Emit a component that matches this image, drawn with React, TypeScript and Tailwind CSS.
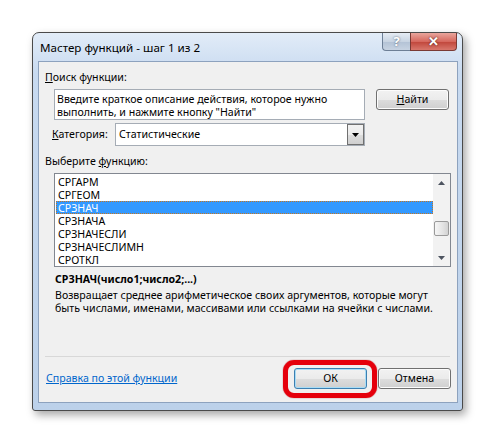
import React from "react";

const items = [
  "СРГАРМ",
  "СРГЕОМ",
  "СРЗНАЧ",
  "СРЗНАЧА",
  "СРЗНАЧЕСЛИ",
  "СРЗНАЧЕСЛИМН",
  "СРОТКЛ",
];

const Btn = ({
  children,
  primary,
}: {
  children: React.ReactNode;
  primary?: boolean;
}) => (
  <div
    className={`flex h-[21px] w-[73px] items-center justify-center rounded-[3px] border ${
      primary
        ? "border-[#3c7fb1] shadow-[inset_0_0_0_1px_#a8dcf5]"
        : "border-[#707070] shadow-[inset_0_0_0_1px_#fcfcfc]"
    } bg-[linear-gradient(#f2f2f2_0%,#ebebeb_50%,#dddddd_51%,#cfcfcf_100%)] text-black`}
  >
    {children}
  </div>
);

const App = () => {
  return (
    <div className="h-[439px] w-[497px] bg-white pl-[32px] pt-[32px] font-['Noto_Sans',sans-serif] text-[10.6px] leading-[13px] text-black">
      <div className="flex h-[379px] w-[431px] flex-col rounded-t-[7px] rounded-b-[3px] border border-[#4a4a4a] bg-[linear-gradient(#e2ecf8,#c8daf0_40px,#bcd1ea)] shadow-[3px_4px_8px_rgba(0,0,0,0.35)]">
        {/* caption */}
        <div className="flex h-[28px] items-start">
          <div className="ml-[7px] mt-[7px] text-[11.6px] leading-[15px]">
            Мастер функций - шаг 1 из 2
          </div>
          <div className="ml-auto mr-[5px] flex h-[18px]">
            <div className="flex w-[28px] items-center justify-center rounded-bl-[4px] border border-t-0 border-r-0 border-[#6d7f96] bg-[linear-gradient(#e6ecf4,#c8d4e2_50%,#b3c2d5_51%,#c7d3e2)] text-[13px] font-bold text-white [text-shadow:0_0_2px_#44546a]">
              ?
            </div>
            <div className="flex w-[47px] items-center justify-center rounded-br-[4px] border border-t-0 border-[#7a3a34] bg-[linear-gradient(#e9a59c,#d6685e_50%,#c0453a_51%,#d8776c)] text-[13px] font-bold text-white [text-shadow:0_0_2px_#3b1410]">
              ✕
            </div>
          </div>
        </div>

        {/* client area */}
        <div className="ml-[5px] mr-[4px] mb-[7px] flex flex-1 flex-col border border-[#8da2be] bg-[#f0f0f0]">
          <div className="mt-[9px] ml-[6px]">
            <span className="underline">П</span>оиск функции:
          </div>

          <div className="mt-[5px] flex items-start">
            <div className="ml-[15px] h-[31px] w-[311px] border border-[#a5acb5] bg-white px-[2px] pt-[3px]">
              Введите краткое описание действия, которое нужно
              <br />
              выполнить, и нажмите кнопку "Найти"
            </div>
            <div className="ml-[11px]">
              <Btn>
                <span className="underline">Н</span>айти
              </Btn>
            </div>
          </div>

          <div className="mt-[3px] flex items-center">
            <div className="ml-[13px] w-[63px]">
              <span className="underline">К</span>атегория:
            </div>
            <div className="flex h-[23px] w-[250px] items-center border border-[#a5acb5] bg-white">
              <div className="flex-1 pl-[3px]">Статистические</div>
              <div className="flex h-[21px] w-[17px] items-center justify-center border border-[#707070] bg-[linear-gradient(#f2f2f2,#ebebeb_50%,#dddddd_51%,#cfcfcf)]">
                <svg width="7" height="4" viewBox="0 0 7 4">
                  <path d="M0 0h7L3.5 4z" fill="#000" />
                </svg>
              </div>
            </div>
          </div>

          <div className="mt-[9px] ml-[6px]">
            Выберите <span className="underline">ф</span>ункцию:
          </div>

          {/* function list */}
          <div className="mt-[5px] ml-[15px] flex h-[94px] w-[397px] border border-[#828790] bg-white">
            <div className="flex-1 pl-[1px] pt-[1px]">
              {items.map((item) =>
                item === "СРЗНАЧ" ? (
                  <div
                    key={item}
                    className="h-[13px] border border-dotted border-[#c8761e] bg-[#3399ff] pl-[1px] leading-[13px] text-white"
                  >
                    {item}
                  </div>
                ) : (
                  <div key={item} className="h-[13px] pl-[2px] leading-[15px]">
                    {item}
                  </div>
                )
              )}
            </div>
            <div className="flex w-[17px] flex-col items-center bg-[#f2f2f2]">
              <div className="flex h-[17px] w-full items-center justify-center">
                <svg width="7" height="4" viewBox="0 0 7 4">
                  <path d="M3.5 0L7 4H0z" fill="#4d5460" />
                </svg>
              </div>
              <div className="mt-[30px] h-[15px] w-[15px] rounded-[2px] border border-[#9a9a9a] bg-[linear-gradient(90deg,#f6f6f6,#e3e3e3_60%,#d2d2d2)]" />
              <div className="mt-auto flex h-[17px] w-full items-center justify-center">
                <svg width="7" height="4" viewBox="0 0 7 4">
                  <path d="M0 0h7L3.5 4z" fill="#4d5460" />
                </svg>
              </div>
            </div>
          </div>

          <div className="mt-[6px] ml-[16px] font-bold">
            СРЗНАЧ(число1;число2;...)
          </div>
          <div className="mt-[3px] ml-[16px]">
            Возвращает среднее арифметическое своих аргументов, которые могут
            <br />
            быть числами, именами, массивами или ссылками на ячейки с числами.
          </div>

          <div className="mt-[41px] ml-[6px] w-[405px] border-t border-[#d8d8d8]" />

          <div className="mt-[11px] flex items-center">
            <div className="ml-[7px] text-[#0066cc] underline">
              Справка по этой функции
            </div>
            <div className="relative ml-auto">
              <Btn primary>ОК</Btn>
              <div className="absolute -left-[11px] -top-[8px] -right-[10px] -bottom-[9px] rounded-[11px] border-[5px] border-[#e5000c] shadow-[0_0_1px_#900]" />
            </div>
            <div className="ml-[11px] mr-[6px]">
              <Btn>Отмена</Btn>
            </div>
          </div>
        </div>
      </div>
    </div>
  );
};

export default App;
